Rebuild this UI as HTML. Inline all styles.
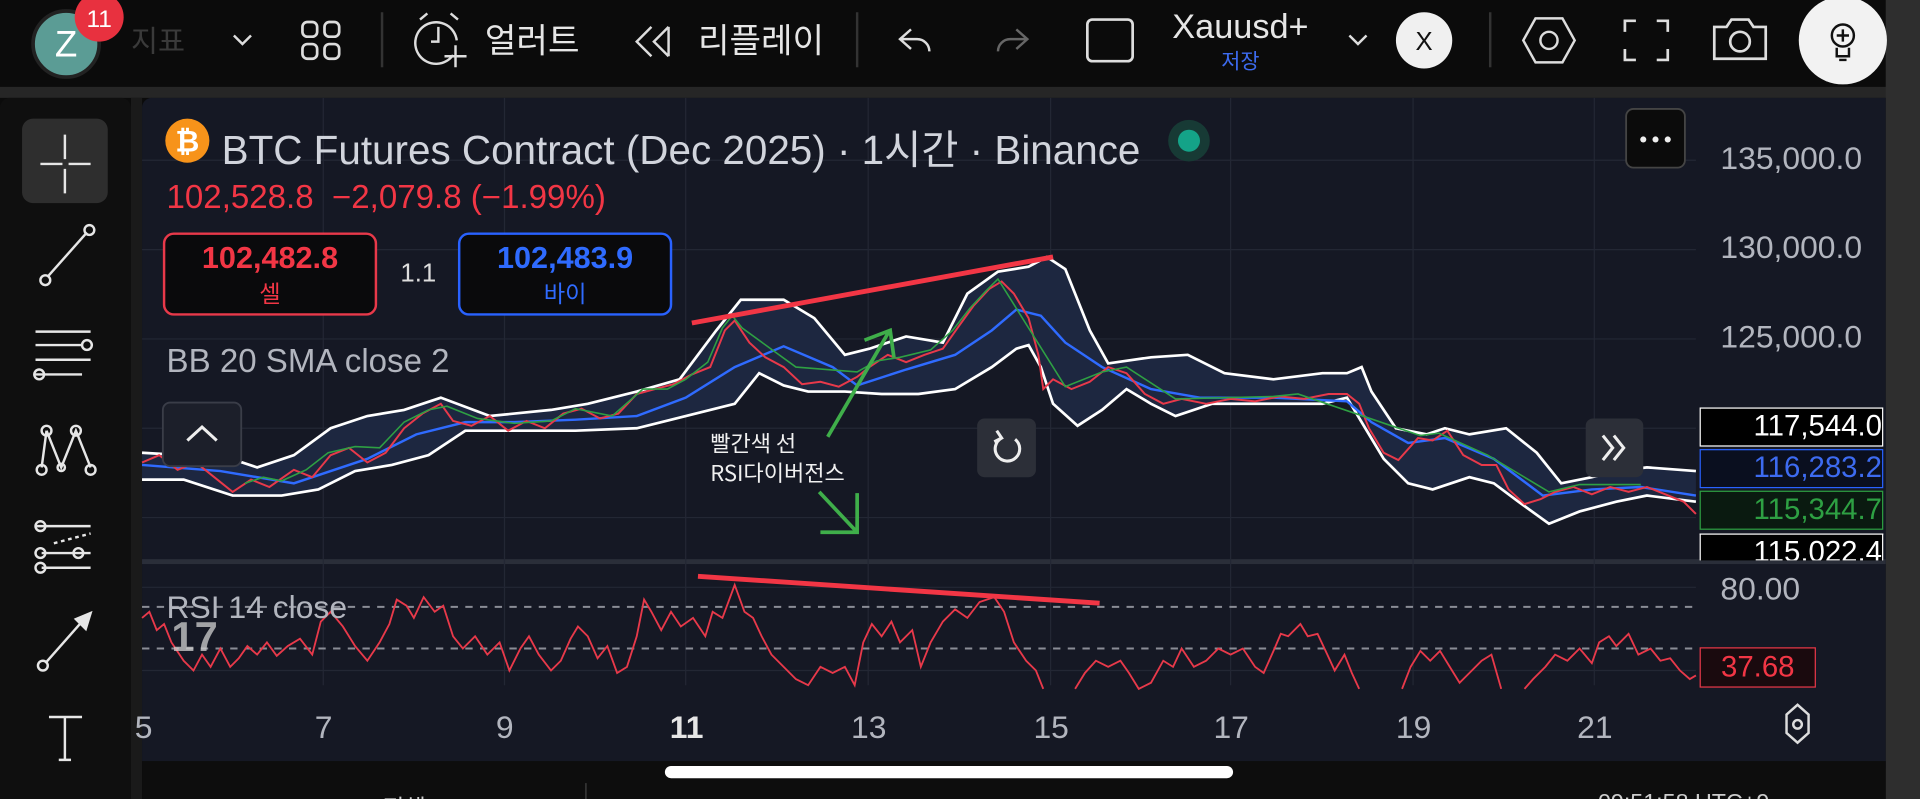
<!DOCTYPE html>
<html><head><meta charset="utf-8"><style>
html,body{margin:0;padding:0;background:#0b0b0b;overflow:hidden;width:1920px;height:799px}
#w{position:absolute;left:0;top:0;width:1568px;height:653px;transform:scale(1.22449,1.22358);transform-origin:0 0;background:#0b0b0b;font-family:"Liberation Sans","Noto Sans CJK KR",sans-serif;color:#d1d4dc;overflow:hidden}
.a{position:absolute;white-space:nowrap}
svg{position:absolute;left:0;top:0}
</style></head><body><div id="w">
<div class="a" style="left:0;top:71px;width:1568px;height:9px;background:#262626"></div>
<div class="a" style="left:1540px;top:0;width:28px;height:653px;background:#2e2e2e"></div>
<div class="a" style="left:0;top:80px;width:107px;height:573px;background:#0f0f0f;border-radius:8px 8px 0 0"></div>
<div class="a" style="left:107px;top:80px;width:9px;height:573px;background:#1a1a1a"></div>
<div class="a" style="left:116px;top:80px;width:1424px;height:548px;background:#151824;border-radius:8px 0 0 0"></div>
<div class="a" style="left:116px;top:457px;width:1424px;height:4px;background:#2a2e39"></div>
<div class="a" style="left:116px;top:622px;width:1424px;height:31px;background:#0d0d0d"></div>
<div class="a" style="left:543px;top:626px;width:464px;height:10px;background:#fff;border-radius:5px"></div>
<div class="a" style="left:148px;top:646px;font-size:19px;color:#ccc">1D &nbsp; 5D &nbsp; 1M &nbsp; 3M &nbsp; 전체</div>
<div class="a" style="left:478px;top:640px;width:1px;height:13px;background:#444"></div>
<div class="a" style="left:1305px;top:646px;font-size:19px;color:#ccc">09:51:58 UTC+9</div>

<svg width="1568" height="653" viewBox="0 0 1568 653">
<circle cx="54" cy="36" r="27" fill="#5b9c95" stroke="#222" stroke-width="3"/>
<text x="54" y="46" font-size="30" fill="#fff" text-anchor="middle" font-family="Liberation Sans">Z</text>
<circle cx="81" cy="14" r="20" fill="#e8313f"/>
<text x="81" y="22" font-size="20" fill="#fff" text-anchor="middle" font-family="Liberation Sans">11</text>
<text x="107" y="42" font-size="24" fill="#3a3a3a" font-family="Noto Sans CJK KR">지표</text>
<path d="M191 29l7 7 7-7" stroke="#ddd" stroke-width="2" fill="none"/>
<g stroke="#ddd" stroke-width="2.2" fill="none">
<rect x="247" y="18" width="12" height="12" rx="4"/><rect x="265" y="18" width="12" height="12" rx="4"/>
<rect x="247" y="36" width="12" height="12" rx="4"/><rect x="265" y="36" width="12" height="12" rx="4"/>
</g>
<line x1="312" y1="10" x2="312" y2="55" stroke="#333" stroke-width="2"/>
<g stroke="#ddd" stroke-width="2" fill="none">
<path d="M370 45 A17 17 0 1 1 373 33"/><path d="M358 22v12h-6"/><path d="M343 16l6-5M374 16l-6-5"/><path d="M372 37v18M363 46h18"/>
</g>
<text x="396" y="43" font-size="28" fill="#e6e6e6" font-family="Noto Sans CJK KR">얼러트</text>
<g stroke="#ddd" stroke-width="2" fill="none"><path d="M532 22l-12 12 12 12M546 22l-12 12 12 12M546 22v24"/></g>
<text x="570" y="43" font-size="28" fill="#e6e6e6" font-family="Noto Sans CJK KR">리플레이</text>
<line x1="700" y1="10" x2="700" y2="55" stroke="#333" stroke-width="2"/>
<path d="M744 24l-9 8 9 8M735 32h14a10 10 0 0 1 10 10" stroke="#ddd" stroke-width="2" fill="none"/>
<path d="M830 24l9 8-9 8M839 32h-14a10 10 0 0 0-10 10" stroke="#666" stroke-width="2" fill="none"/>
<rect x="888" y="16" width="37" height="34" rx="4" stroke="#ddd" stroke-width="2.2" fill="none"/>
<text x="1013" y="31" font-size="28" fill="#e6e6e6" text-anchor="middle" font-family="Liberation Sans">Xauusd+</text>
<text x="1013" y="56" font-size="17" fill="#3d6bf0" text-anchor="middle" font-family="Noto Sans CJK KR">저장</text>
<path d="M1102 29l7 7 7-7" stroke="#ddd" stroke-width="2" fill="none"/>
<circle cx="1163" cy="33" r="23" fill="#f0f0f0"/>
<text x="1163" y="41" font-size="21" fill="#111" text-anchor="middle" font-family="Liberation Sans">X</text>
<line x1="1217" y1="10" x2="1217" y2="55" stroke="#333" stroke-width="2"/>
<path d="M1254 15h22l10 18-10 18h-22l-10-18z" stroke="#ddd" stroke-width="2" fill="none"/>
<circle cx="1265" cy="33" r="7" stroke="#ddd" stroke-width="2" fill="none"/>
<path d="M1327 26v-9h9M1353 17h9v9M1362 40v9h-9M1336 49h-9v-9" stroke="#ddd" stroke-width="2.2" fill="none"/>
<path d="M1400 22h10l4-6h14l4 6h10v26h-42z" stroke="#ddd" stroke-width="2.2" fill="none"/>
<circle cx="1421" cy="34" r="8" stroke="#ddd" stroke-width="2.2" fill="none"/>
<circle cx="1505" cy="33" r="36" fill="#f2f2f2"/>
<circle cx="1505" cy="29" r="9" stroke="#111" stroke-width="2" fill="none"/>
<path d="M1505 24v10M1500 29h10M1500 39v7h10v-7M1502 49h6" stroke="#111" stroke-width="2" fill="none"/>

<rect x="18" y="97" width="70" height="69" rx="9" fill="#2e2e2e"/>
<g stroke="#e6e6e6" stroke-width="2" fill="none">
<path d="M53 110v20M53 138v20M33 134h18M56 134h18"/>
<path d="M39 226l32-36"/><circle cx="37" cy="229" r="4"/><circle cx="73" cy="188" r="4"/>
<path d="M29 271h45M29 282h38M29 294h45M29 306h38"/><circle cx="71" cy="282" r="4"/><circle cx="32" cy="306" r="4"/>
<path d="M38 352l12 30 12-30 12 30M38 352l-4 30M62 352l12 30"/><circle cx="38" cy="352" r="4"/><circle cx="62" cy="352" r="4"/><circle cx="34" cy="384" r="4"/><circle cx="74" cy="384" r="4"/><circle cx="50" cy="382" r="3"/>
<path d="M29 430h45M34 452h40M34 464h40"/><path d="M44 444l30-8" stroke-dasharray="3 3"/><circle cx="33" cy="430" r="4"/><circle cx="33" cy="452" r="4"/><circle cx="33" cy="464" r="4"/><circle cx="64" cy="452" r="4"/>
<path d="M37 542l30-34"/><circle cx="35" cy="544" r="4"/><path d="M62 506l12-5-4 13z" fill="#e6e6e6"/>
<path d="M40 586h27M53 586v35M48 621h10"/>
</g>

<g stroke="#232734" stroke-width="1">
<path d="M116 131H1385M116 204H1385M116 277H1385M116 350H1385M116 423H1385"/>
<path d="M264 80V560M412 80V560M560 80V560M709 80V560M858 80V560M1005 80V560M1154 80V560M1302 80V560"/>
<path d="M116 480H1385M116 548H1385"/>
</g>

<path d="M116 370L150 372 180 372 210 382 240 372 270 350 300 340 330 335 360 325 400 340 450 335 480 330 520 320 555 310 585 270 605 245 640 245 665 260 690 290 710 285 740 275 770 280 790 240 815 222 840 218 855 210 870 220 890 270 905 297 940 292 970 290 1000 305 1040 310 1080 305 1100 305 1112 300 1120 320 1140 350 1165 355 1180 350 1200 355 1230 350 1255 370 1275 395 1300 390 1320 385 1345 382 1385 385 L1385 410 1345 405 1320 410 1290 418 1265 428 1240 410 1220 395 1200 390 1170 400 1150 395 1130 375 1115 350 1100 325 1080 330 1040 330 990 330 960 340 940 330 920 318 900 335 880 348 860 330 850 300 840 282 830 285 810 300 780 318 750 322 720 322 690 320 660 320 640 315 620 305 600 330 560 340 520 350 470 352 420 352 380 352 350 372 320 380 290 385 260 400 230 405 190 405 150 392 116 392Z" fill="#1d2740"/>
<g fill="none" stroke="#fff" stroke-width="2.2">
<polyline points="116,370 150,372 180,372 210,382 240,372 270,350 300,340 330,335 360,325 400,340 450,335 480,330 520,320 555,310 585,270 605,245 640,245 665,260 690,290 710,285 740,275 770,280 790,240 815,222 840,218 855,210 870,220 890,270 905,297 940,292 970,290 1000,305 1040,310 1080,305 1100,305 1112,300 1120,320 1140,350 1165,355 1180,350 1200,355 1230,350 1255,370 1275,395 1300,390 1320,385 1345,382 1385,385"/>
<polyline points="116,392 150,392 190,405 230,405 260,400 290,385 320,380 350,372 380,352 420,352 470,352 520,350 560,340 600,330 620,305 640,315 660,320 690,320 720,322 750,322 780,318 810,300 830,285 840,282 850,300 860,330 880,348 900,335 920,318 940,330 960,340 990,330 1040,330 1080,330 1100,325 1115,350 1130,375 1150,395 1170,400 1200,390 1220,395 1240,410 1265,428 1290,418 1320,410 1345,405 1385,410"/>
</g>
<polyline fill="none" stroke="#2f6bff" stroke-width="2" points="116,380 180,385 240,395 300,375 340,355 380,345 420,345 470,343 520,340 560,325 600,300 640,283 680,300 700,315 740,302 780,290 810,270 830,253 850,258 870,280 900,300 940,318 980,325 1040,325 1100,328 1120,345 1150,362 1180,358 1220,375 1260,405 1300,400 1340,398 1385,405"/>
<polyline fill="none" stroke="#e8394a" stroke-width="1.6" points="116,378 130,372 145,384 160,378 175,390 190,402 205,392 220,398 240,384 255,390 270,372 285,366 300,378 315,370 330,350 345,338 360,330 370,344 385,348 400,340 415,352 430,344 445,350 460,338 475,334 490,342 505,338 520,322 535,318 550,314 565,306 580,300 592,270 600,262 612,280 625,292 640,300 655,314 670,312 685,316 700,308 710,300 725,290 740,296 755,290 770,285 782,268 795,250 808,236 818,230 828,240 840,260 848,290 852,318 860,310 875,318 890,312 905,300 920,305 935,322 950,330 965,326 985,330 1005,326 1025,328 1045,324 1065,326 1085,322 1100,322 1110,330 1118,350 1130,370 1142,376 1158,358 1170,360 1182,352 1195,372 1210,380 1222,380 1232,400 1245,412 1258,408 1270,402 1285,398 1300,404 1315,398 1330,402 1345,398 1360,404 1375,410 1385,420"/>
<polyline fill="none" stroke="#2ea043" stroke-width="1.3" points="200,395 215,390 230,393 250,384 268,370 290,365 310,366 330,345 350,335 365,332 390,342 420,346 450,344 470,334 500,340 525,318 545,318 560,310 578,296 590,268 598,258 606,268 650,300 700,304 716,295 735,292 760,286 778,270 792,252 805,238 815,228 870,316 900,304 920,300 960,326 1040,324 1060,322 1160,356 1175,354 1215,372 1265,402 1290,396 1340,396"/>

<line x1="565" y1="264" x2="860" y2="210" stroke="#f23645" stroke-width="4"/>
<line x1="570" y1="471" x2="898" y2="493" stroke="#f23645" stroke-width="4"/>
<g stroke="#3fae4a" stroke-width="3" fill="none">
<path d="M676 357l50-86M706 278l21-8 3 22"/>
<path d="M669 402l31 33M670 435h30v-32"/>
</g>
<text x="580" y="369" font-size="18" fill="#f0f0f0" font-family="Noto Sans CJK KR">빨간색 선</text>
<text x="580" y="393" font-size="18" fill="#f0f0f0" font-family="Noto Sans CJK KR">RSI다이버전스</text>

<rect x="133" y="329" width="64" height="52" rx="6" fill="#1c1f2a" stroke="#3a3d48" stroke-width="1.5"/>
<path d="M153 360l12-11 12 11" stroke="#eee" stroke-width="2.5" fill="none"/>
<rect x="798" y="342" width="48" height="48" rx="6" fill="#2c2f38"/>
<path d="M829 359a10 10 0 1 1-11-1M814 352l4 6-6 3" stroke="#eee" stroke-width="2.5" fill="none"/>
<rect x="1295" y="342" width="47" height="48" rx="6" fill="#2c2f38"/>
<path d="M1309 356l8 10-8 10M1318 356l8 10-8 10" stroke="#eee" stroke-width="2.5" fill="none"/>
<rect x="1328" y="89" width="48" height="48" rx="6" fill="#0b0b0b" stroke="#444" stroke-width="1.5"/>
<circle cx="1342" cy="114" r="2.5" fill="#eee"/><circle cx="1352" cy="114" r="2.5" fill="#eee"/><circle cx="1362" cy="114" r="2.5" fill="#eee"/>

<circle cx="153" cy="115" r="18" fill="#f7931a"/>
<text x="153" y="124" font-size="24" fill="#fff" text-anchor="middle" font-weight="bold" font-family="Liberation Sans">₿</text>
<circle cx="971" cy="115" r="17" fill="#173a35"/><circle cx="971" cy="115" r="9" fill="#14a388"/>

<path d="M116 496H1385M116 530H1385" stroke="#8a8d96" stroke-width="1.6" stroke-dasharray="6 6"/>
<polyline fill="none" stroke="#e8394a" stroke-width="1.5" points="116,505 122,500 128,515 134,510 140,525 150,540 158,548 165,535 172,545 180,530 188,545 195,538 202,528 210,535 218,525 226,536 235,528 245,522 255,535 262,508 270,500 280,512 290,528 300,540 310,525 318,510 324,490 332,495 338,505 346,488 355,500 362,495 370,520 378,530 388,520 398,535 408,525 416,548 425,530 432,520 440,535 450,548 458,540 466,522 472,512 480,520 488,538 496,528 504,550 512,545 520,520 526,490 532,500 540,515 548,500 556,512 566,505 576,520 582,500 590,505 600,478 608,500 615,505 622,520 630,535 640,545 650,555 660,560 670,545 680,550 690,545 698,560 705,525 712,510 720,520 728,508 735,525 745,515 752,545 760,525 770,508 780,498 790,505 800,492 812,488 820,500 828,525 838,540 846,548 852,563"/>
<polyline fill="none" stroke="#e8394a" stroke-width="1.5" points="878,563 886,550 895,540 905,545 915,540 922,550 930,563 940,558 950,540 958,545 965,530 975,545 985,540 995,530 1005,535 1015,530 1025,545 1032,550 1040,532 1046,518 1052,520 1062,510 1068,520 1076,518 1084,535 1090,548 1098,535 1104,550 1110,563"/>
<polyline fill="none" stroke="#e8394a" stroke-width="1.5" points="1145,563 1152,545 1160,532 1168,540 1176,532 1184,545 1192,558 1200,550 1210,540 1218,535 1226,563"/>
<polyline fill="none" stroke="#e8394a" stroke-width="1.5" points="1245,563 1252,555 1262,545 1270,535 1280,540 1290,530 1300,542 1306,525 1314,520 1320,528 1330,518 1338,535 1348,530 1356,540 1364,538 1372,548 1380,555 1385,552"/>
<text x="140" y="532" font-size="34" fill="#d0d0d0" font-weight="bold" font-family="Liberation Sans" opacity="0.75">17</text>

<path d="M1459 584l9-8 9 8v15l-9 8-9-8z" stroke="#ddd" stroke-width="2" fill="none"/>
<circle cx="1468" cy="592" r="3.5" stroke="#ddd" stroke-width="2" fill="none"/>
</svg>

<div class="a" style="left:181px;top:96px;font-size:33px;color:#d1d4dc">BTC Futures Contract (Dec 2025) · 1시간 · Binance</div>
<div class="a" style="left:136px;top:146px;font-size:27px;color:#f23645">102,528.8 &nbsp;−2,079.8 (−1.99%)</div>
<div class="a" style="left:133px;top:190px;width:171px;height:64px;border:2px solid #e8394a;border-radius:9px;background:#0a0a0c;text-align:center">
<div style="font-size:25px;font-weight:bold;color:#f23645;margin-top:5px">102,482.8</div><div style="font-size:19px;color:#f23645">셀</div></div>
<div class="a" style="left:327px;top:212px;font-size:21px;color:#ddd">1.1</div>
<div class="a" style="left:374px;top:190px;width:171px;height:64px;border:2px solid #2962ff;border-radius:9px;background:#0a0a0c;text-align:center">
<div style="font-size:25px;font-weight:bold;color:#2f6bff;margin-top:5px">102,483.9</div><div style="font-size:19px;color:#2f6bff">바이</div></div>
<div class="a" style="left:136px;top:280px;font-size:27px;color:#b2b5be">BB 20 SMA close 2</div>
<div class="a" style="left:136px;top:481px;font-size:26px;color:#b2b5be">RSI 14 close</div>

<div class="a" style="left:1405px;top:114px;font-size:26px;color:#b2b5be">135,000.0</div>
<div class="a" style="left:1405px;top:187px;font-size:26px;color:#b2b5be">130,000.0</div>
<div class="a" style="left:1405px;top:260px;font-size:26px;color:#b2b5be">125,000.0</div>
<div class="a" style="left:1388px;top:333px;width:148px;height:30px;border:1.5px solid #fff;background:#000;font-size:24px;color:#fff;text-align:right;line-height:30px">117,544.0</div>
<div class="a" style="left:1388px;top:367px;width:148px;height:30px;border:1.5px solid #2962ff;background:#0a0f1f;font-size:24px;color:#3d6bf0;text-align:right;line-height:30px">116,283.2</div>
<div class="a" style="left:1388px;top:401px;width:148px;height:30px;border:1.5px solid #2ea043;background:#0a1a10;font-size:24px;color:#2ea043;text-align:right;line-height:30px">115,344.7</div>
<div class="a" style="left:1388px;top:436px;width:148px;height:21px;border:1.5px solid #fff;border-bottom:none;background:#000;font-size:24px;color:#fff;text-align:right;line-height:30px;overflow:hidden">115,022.4</div>
<div class="a" style="left:1405px;top:466px;font-size:26px;color:#b2b5be">80.00</div>
<div class="a" style="left:1388px;top:529px;width:93px;height:31px;border:1.5px solid #e8394a;background:#1a0a0e;font-size:24px;color:#f23645;text-align:center;line-height:31px">37.68</div>

<div class="a" style="left:110px;top:579px;font-size:26px;color:#b2b5be">5</div>
<div class="a" style="left:257px;top:579px;font-size:26px;color:#b2b5be">7</div>
<div class="a" style="left:405px;top:579px;font-size:26px;color:#b2b5be">9</div>
<div class="a" style="left:547px;top:579px;font-size:26px;color:#e6e6e6;font-weight:bold">11</div>
<div class="a" style="left:695px;top:579px;font-size:26px;color:#b2b5be">13</div>
<div class="a" style="left:844px;top:579px;font-size:26px;color:#b2b5be">15</div>
<div class="a" style="left:991px;top:579px;font-size:26px;color:#b2b5be">17</div>
<div class="a" style="left:1140px;top:579px;font-size:26px;color:#b2b5be">19</div>
<div class="a" style="left:1288px;top:579px;font-size:26px;color:#b2b5be">21</div>
</div></body></html>
